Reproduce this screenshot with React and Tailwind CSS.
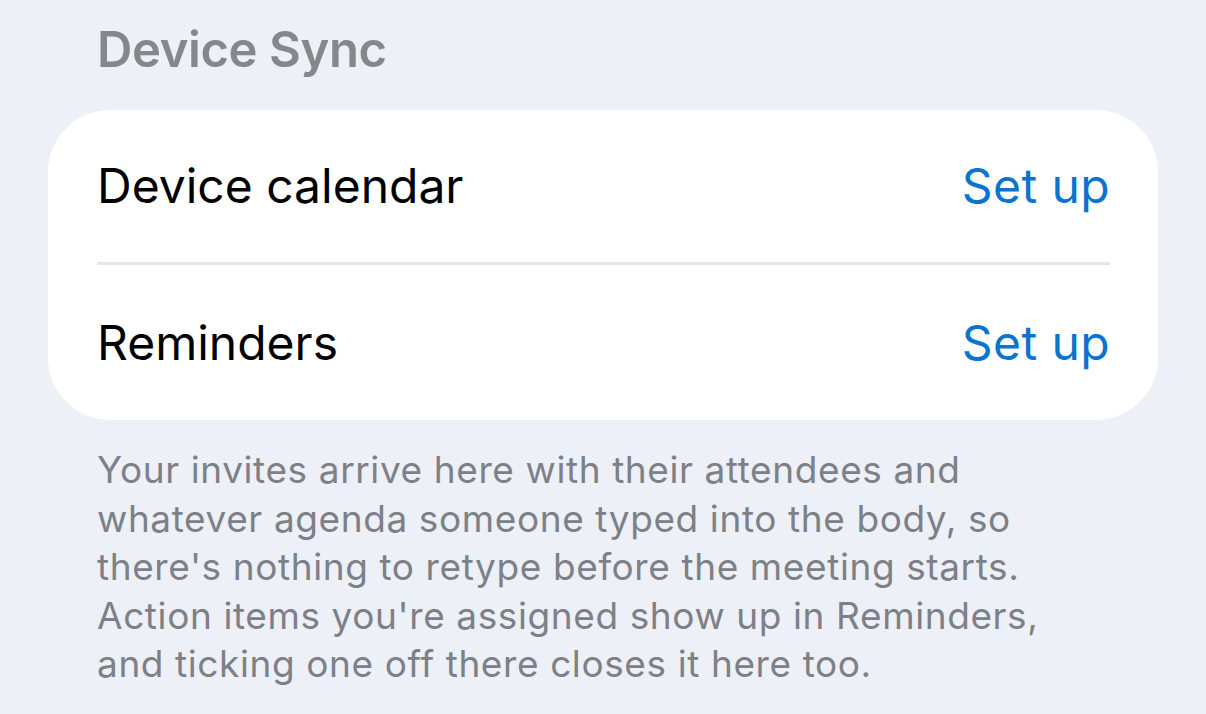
export default function App() {
  const rows = ["Device calendar", "Reminders"];
  const footer = [
    "Your invites arrive here with their attendees and",
    "whatever agenda someone typed into the body, so",
    "there's nothing to retype before the meeting starts.",
    "Action items you're assigned show up in Reminders,",
    "and ticking one off there closes it here too.",
  ];
  return (
    <div className="min-h-screen w-full bg-[#edf0f6] font-['Inter',sans-serif] pl-[48px] pr-[48px]">
      <div className="pl-[49px] pt-[20px] text-[49px] font-semibold leading-[60px] text-[#85878b] tracking-[-0.4px]">
        Device Sync
      </div>
      <div className="mt-[30px] bg-white rounded-[62px] pl-[49px] pr-[48px]">
        {rows.map((label, i) => (
          <div
            key={label}
            className={
              "flex items-center justify-between h-[155px] " +
              (i < rows.length - 1 ? "border-b-[3px] border-[#e5e5ea]" : "")
            }
          >
            <span className="text-[48px] text-black tracking-[0px]">{label}</span>
            <span className="text-[48px] text-[#0a74d0] tracking-[0.4px]">Set up</span>
          </div>
        ))}
      </div>
      <p className="pl-[49px] mt-[26px] text-[37px] leading-[48.5px] text-[#7d8087] tracking-[0.6px] whitespace-nowrap">
        {footer.map((line) => (
          <span key={line} className="block">{line}</span>
        ))}
      </p>
    </div>
  );
}
